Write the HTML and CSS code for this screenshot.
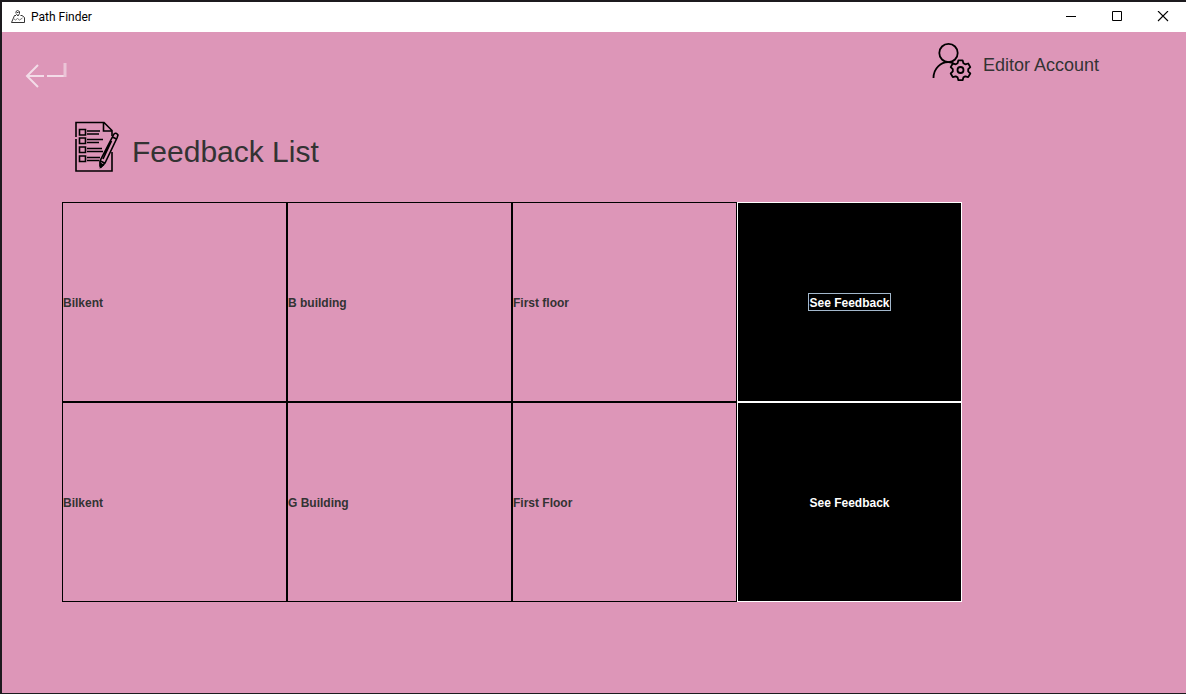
FILE: index.html
```html
<!DOCTYPE html>
<html lang="en">
<head>
<meta charset="utf-8">
<title>Path Finder</title>
<link rel="stylesheet" href="styles.css">
</head>
<body>
<div class="window">
  <header class="titlebar">
    <svg class="app-icon" width="14" height="14" viewBox="0 0 14 14" fill="none" stroke="#333" aria-hidden="true">
      <path d="M5 3V1.500L6.500.5L8.500 1.500V3.500L7 6L5 3.500M6 2.500h1.500M3.500 5.500L.5 12.500h13V7.500L11 5.500H9.500M3.500 5.500H5"/>
      <path d="M2.500 8.500l2 1.500 2-1.500 2 1.500 3-2" stroke="#777"/>
    </svg>
    <span class="app-name">Path Finder</span>
    <div class="window-controls">
      <button class="window-button" aria-label="Minimize"><svg width="12" height="12" viewBox="0 0 12 12" fill="none" stroke="#000"><path d="M1 5.500h10"/></svg></button>
      <button class="window-button" aria-label="Maximize"><svg width="12" height="12" viewBox="0 0 12 12" fill="none" stroke="#000"><path d="M1.500 .5h9v9h-9z"/></svg></button>
      <button class="window-button" aria-label="Close"><svg width="12" height="12" viewBox="0 0 12 12" fill="none" stroke="#000" stroke-width="1.100"><path d="M1 0l10 10M11 0L1 10"/></svg></button>
    </div>
  </header>
  <div class="toolbar">
    <button class="back" aria-label="Back">
      <svg width="44" height="30" viewBox="0 0 44 30" fill="none" stroke="#f3dce8" stroke-width="2"><path d="M14 5L3 16l11 11M3 16h17M23 16h18" /><path d="M41 17V3" stroke-width="3" stroke="#ebc4d7"/></svg>
    </button>
    <div class="account">
      <svg width="40" height="44" viewBox="0 0 40 44" fill="none" stroke="#000" stroke-width="1.800" stroke-linejoin="round" aria-hidden="true">
        <circle cx="16.500" cy="11" r="9.200"/>
        <path d="M1.500 36C1.500 26 9 20 16.500 20.200q3.300.1 6 1.700"/>
        <path d="M26.400 18.300h4.200l.8 2.900 1.900 1.100 2.900-.8 2.100 3.600-2.100 2.100v2.200l2.100 2.100-2.100 3.600-2.900-.8-1.900 1.100-.8 2.800h-4.200l-.8-2.800-1.900-1.100-2.900.8-2.100-3.600 2.100-2.100v-2.200l-2.100-2.100 2.100-3.600 2.900.8 1.900-1.100z"/>
        <circle cx="28.500" cy="28" r="3"/>
      </svg>
      <span>Editor Account</span>
    </div>
  </div>
  <main class="content">
    <div class="heading">
      <svg width="46" height="52" viewBox="0 0 46 52" fill="none" stroke="#000" stroke-width="1.600" aria-hidden="true">
        <path d="M2 16V1.500h28l8 8V15M2 18v32h36V31M29.500 1.500V10H38"/>
        <path d="M5.500 8.500h6v5.500h-6zM5.500 17h6v5.500h-6zM5.500 26h6v5.500h-6zM5.500 35h6v5.500h-6z"/>
        <path d="M13 10h13M13 13h12M13 18.500h16M13 21.500h12M13 27.500h15M13 30.500h16M13 36.500h13M13 39.500h12" stroke-width="1.400"/>
        <path d="M40 13q2-2 4 1l-1 3-12 25-4 4-1-1V40zM38.500 16l4 2M26.500 40l4 2M37.500 20L29 38"/>
        <path d="M26.500 42.500l2.500 1.500-2.500 2z" fill="#000"/>
      </svg>
      <h1 class="title">Feedback List</h1>
    </div>
    <table class="feedback">
      <tbody>
        <tr><td>Bilkent</td><td>B building</td><td>First floor</td><td class="action"><button class="see focused"><span class="label">See Feedback</span></button></td></tr>
        <tr><td>Bilkent</td><td>G Building</td><td>First Floor</td><td class="action"><button class="see"><span class="label">See Feedback</span></button></td></tr>
      </tbody>
    </table>
  </main>
</div>
</body>
</html>
```
FILE: styles.css
```css
* { box-sizing: border-box; }

body {
  margin: 0;
  font-family: "Liberation Sans", Arial, sans-serif;
  color: #333;
}

button {
  padding: 0;
  border: 0;
  background: none;
  font: inherit;
}

svg { display: block; flex: none; }

.window {
  min-height: 100vh;
  border: solid #1c1a1e;
  border-width: 2px 0 1px 2px;
  background: #dd96b8;
}

.titlebar {
  display: flex;
  align-items: center;
  gap: 6px;
  height: 30px;
  padding-left: 9px;
  background: #fff;
  color: #000;
}

.app-name {
  font: 12px Roboto, "Open Sans", sans-serif;
}

.window-controls {
  display: flex;
  margin-left: auto;
}

.window-button {
  display: flex;
  align-items: center;
  justify-content: center;
  width: 46px;
  height: 30px;
}

.toolbar {
  display: flex;
  justify-content: space-between;
  align-items: flex-start;
  padding: 10px 87px 0 22px;
}

.back { margin-top: 18px; }

.account {
  display: flex;
  align-items: center;
  gap: 11px;
  height: 44px;
  font-size: 18px;
  line-height: 22px;
}

.account span { padding-top: 2px; }

.content { padding: 31px 224px 48px 60px; }

.heading {
  display: flex;
  align-items: center;
  gap: 12px;
  padding-left: 12px;
}

.title {
  margin: 0;
  padding-top: 10px;
  font-size: 30px;
  font-weight: 400;
}

.feedback {
  width: 100%;
  margin-top: 29px;
  table-layout: fixed;
  border-collapse: separate;
  border-spacing: 0;
  font-size: 12px;
  font-weight: 700;
}

.feedback td {
  height: 200px;
  padding: 2px 0 0;
  border: 1px solid #000;
}

.feedback .action {
  padding: 0;
  border-color: #fff;
}

.see {
  display: block;
  width: 100%;
  height: 198px;
  background: #000;
  color: #fff;
}

.label {
  display: inline-block;
  padding: 2px 0 0;
  border: 1px solid transparent;
}

.focused .label { border-color: #a3b8cc; }
```
